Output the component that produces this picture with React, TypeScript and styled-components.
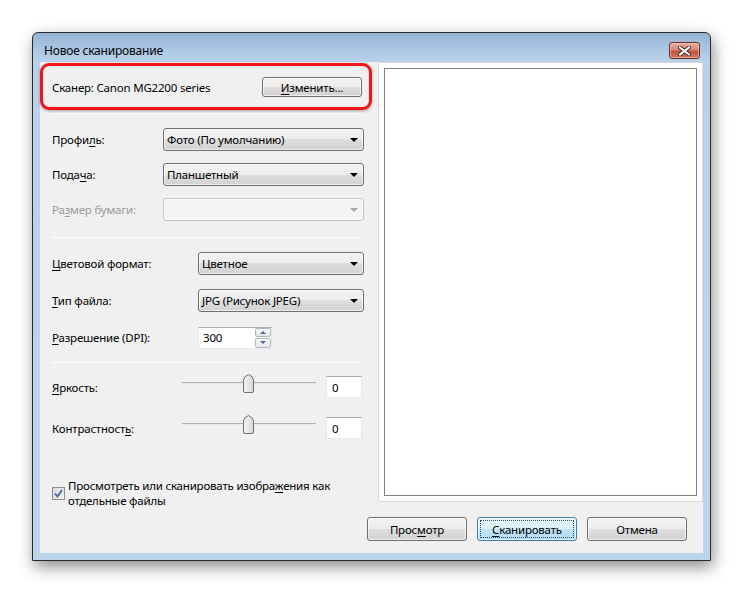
import React from "react";
import styled, { createGlobalStyle } from "styled-components";

const GlobalStyle = createGlobalStyle`
  html, body {
    margin: 0;
    padding: 0;
    background: #ffffff;
  }
  body {
    font-family: "Noto Sans", "Open Sans", sans-serif;
    font-size: 11.5px;
    letter-spacing: -0.2px;
    color: #000;
  }
`;

const Page = styled.div`
  width: 743px;
  height: 593px;
  box-sizing: border-box;
  padding: 32px 0 0 32px;
`;

const Window = styled.div`
  width: 679px;
  height: 529px;
  box-sizing: border-box;
  border: 1px solid #2a2a2a;
  border-radius: 6px 6px 0 0;
  background: linear-gradient(to bottom, #97b3d3 0px, #a9c4e2 14px, #b9d1ea 28px, #bcd4ec 100%);
  box-shadow: 2px 6px 16px rgba(0, 0, 0, 0.45);
  display: flex;
  flex-direction: column;
  padding: 0 7px 7px 7px;
`;

const TitleBar = styled.div`
  height: 29px;
  box-sizing: border-box;
  padding: 6px 3px 0 4px;
  display: flex;
  align-items: center;
  justify-content: space-between;
`;

const Title = styled.span`
  font-size: 12px;
  color: #000;
`;

const CloseButton = styled.div`
  width: 31px;
  height: 17px;
  box-sizing: border-box;
  border: 1px solid #6a2c25;
  border-radius: 3px;
  background: linear-gradient(to bottom, #e9a89b 0%, #d98a7c 45%, #c4523f 55%, #d47a68 100%);
  box-shadow: inset 0 0 0 1px rgba(255, 255, 255, 0.35);
  display: flex;
  align-items: center;
  justify-content: center;
`;

const Client = styled.div`
  flex: 1;
  background: #f0f0f0;
  display: grid;
  grid-template-columns: 338px 1fr;
  grid-template-rows: 440px 1fr;
`;

const LeftPane = styled.div`
  position: relative;
  padding: 15px 14px 0 12px;
  display: flex;
  flex-direction: column;
`;

const Highlight = styled.div`
  position: absolute;
  left: 0;
  top: 1px;
  width: 332px;
  height: 47px;
  box-sizing: border-box;
  border: 3px solid #f0151b;
  border-radius: 9px;
  box-shadow: 0 1px 3px rgba(0, 0, 0, 0.35), inset 0 0 1px rgba(120, 0, 0, 0.4);
  pointer-events: none;
`;

const ScannerRow = styled.div`
  height: 20px;
  margin-right: 2px;
  display: flex;
  align-items: center;
  justify-content: space-between;
`;

const Divider = styled.div<{ $top: number }>`
  margin-top: ${(p) => p.$top}px;
  margin-right: 2px;
  height: 1px;
  background: #a9a9a9;
  border-bottom: 1px solid #ffffff;
`;

const FieldGrid = styled.div<{ $label: number; $gap: number; $top: number; $row: number }>`
  margin-top: ${(p) => p.$top}px;
  display: grid;
  grid-template-columns: ${(p) => p.$label}px 1fr;
  grid-auto-rows: ${(p) => p.$row}px;
  row-gap: ${(p) => p.$gap}px;
  align-items: center;
`;

const SliderGrid = styled.div`
  margin-top: 13px;
  display: grid;
  grid-template-columns: 130px 144px 36px;
  grid-auto-rows: 22px;
  row-gap: 19px;
  align-items: center;
`;

const Label = styled.span<{ $disabled?: boolean }>`
  color: ${(p) => (p.$disabled ? "#9a9a9a" : "#000")};
  white-space: nowrap;
`;

const U = styled.u`
  text-decoration: underline;
  text-underline-offset: 2px;
`;

const Combo = styled.div<{ $disabled?: boolean }>`
  height: 23px;
  box-sizing: border-box;
  border: 1px solid ${(p) => (p.$disabled ? "#c4c4c4" : "#707070")};
  border-radius: 3px;
  background: ${(p) =>
    p.$disabled
      ? "#f4f4f4"
      : "linear-gradient(to bottom, #f3f3f3 0%, #ececec 50%, #dedede 50%, #d2d2d2 100%)"};
  box-shadow: inset 0 0 0 1px rgba(255, 255, 255, 0.6);
  display: flex;
  align-items: center;
  justify-content: space-between;
  padding: 0 5px 0 3px;
  white-space: nowrap;
`;

const Arrow = styled.span<{ $disabled?: boolean }>`
  width: 0;
  height: 0;
  border-left: 4px solid transparent;
  border-right: 4px solid transparent;
  border-top: 4px solid ${(p) => (p.$disabled ? "#a8a8a8" : "#000")};
`;

const NumberBox = styled.div`
  width: 74px;
  height: 22px;
  box-sizing: border-box;
  border: 1px solid #e3e9ef;
  border-top-color: #abadb3;
  background: #fff;
  display: flex;
  align-items: center;
  justify-content: space-between;
  padding-left: 4px;
`;

const Spinner = styled.div`
  width: 16px;
  height: 20px;
  display: flex;
  flex-direction: column;
  gap: 1px;
`;

const SpinButton = styled.div`
  flex: 1;
  box-sizing: border-box;
  border: 1px solid #b4b9c0;
  border-radius: 2px;
  background: linear-gradient(to bottom, #f7f7f7, #e4e6ea);
  display: flex;
  align-items: center;
  justify-content: center;
`;

const SpinArrow = styled.span<{ $up?: boolean }>`
  width: 0;
  height: 0;
  border-left: 3px solid transparent;
  border-right: 3px solid transparent;
  ${(p) => (p.$up ? "border-bottom: 3px solid #4d6a9e;" : "border-top: 3px solid #4d6a9e;")}
`;

const ValueBox = styled.div`
  width: 36px;
  height: 22px;
  box-sizing: border-box;
  border: 1px solid #e3e9ef;
  border-top-color: #abadb3;
  background: #fff;
  padding-left: 5px;
  display: flex;
  align-items: center;
`;

const SliderCell = styled.div`
  position: relative;
  width: 134px;
  height: 22px;
  align-self: start;
  margin-top: -4px;
`;

const Track = styled.div`
  position: absolute;
  left: 0;
  right: 0;
  top: 10px;
  height: 1px;
  background: #b3b3b3;
  border-bottom: 1px solid #e6e6e6;
`;

const Thumb = styled.svg`
  position: absolute;
  left: 61px;
  top: 2px;
`;

const CheckRow = styled.div`
  margin-top: 39px;
  display: flex;
  align-items: center;
  gap: 3px;
`;

const CheckBox = styled.div`
  width: 13px;
  height: 13px;
  box-sizing: border-box;
  border: 1px solid #8f8f8f;
  background: linear-gradient(135deg, #d8d8d8, #f4f4f4);
  display: flex;
  align-items: center;
  justify-content: center;
  flex-shrink: 0;
`;

const CheckText = styled.span`
  line-height: 15px;
  white-space: nowrap;
`;

const Preview = styled.div`
  box-sizing: border-box;
  border: 1px solid #d8d8d8;
  background: #fff;
  padding: 5px;
`;

const PreviewInner = styled.div`
  width: 100%;
  height: 100%;
  box-sizing: border-box;
  border: 1px solid #828282;
`;

const ButtonRow = styled.div`
  grid-column: 1 / -1;
  display: flex;
  justify-content: flex-end;
  gap: 10px;
  padding: 15px 16px 0 0;
`;

const Button = styled.div<{ $w?: number; $h?: number; $focused?: boolean }>`
  position: relative;
  width: ${(p) => p.$w ?? 100}px;
  height: ${(p) => p.$h ?? 24}px;
  box-sizing: border-box;
  border: 1px solid ${(p) => (p.$focused ? "#3c7fb1" : "#707070")};
  border-radius: 3px;
  background: ${(p) =>
    p.$focused
      ? "linear-gradient(to bottom, #e8f5fc 0%, #dcf0fb 50%, #c4e5f7 50%, #b0dbf3 100%)"
      : "linear-gradient(to bottom, #f3f3f3 0%, #ececec 50%, #dedede 50%, #d2d2d2 100%)"};
  box-shadow: inset 0 0 0 1px rgba(255, 255, 255, 0.65);
  display: flex;
  align-items: center;
  justify-content: center;
  white-space: nowrap;
  ${(p) =>
    p.$focused
      ? `&::after {
          content: "";
          position: absolute;
          inset: 2px;
          border: 1px dotted #2b4f73;
        }`
      : ""}
`;

function Slider() {
  return (
    <SliderCell>
      <Track />
      <Thumb width="11" height="19" viewBox="0 0 11 19">
        <defs>
          <linearGradient id="thumbFill" x1="0" y1="0" x2="1" y2="0">
            <stop offset="0" stopColor="#f6f6f6" />
            <stop offset="1" stopColor="#d6d6d6" />
          </linearGradient>
        </defs>
        <path
          d="M0.5 6 Q0.5 2.5 5.5 0.5 Q10.5 2.5 10.5 6 V17 Q10.5 18.5 9 18.5 H2 Q0.5 18.5 0.5 17 Z"
          fill="url(#thumbFill)"
          stroke="#6f6f6f"
        />
      </Thumb>
    </SliderCell>
  );
}

export default function App() {
  return (
    <>
      <GlobalStyle />
      <Page>
        <Window>
          <TitleBar>
            <Title>Новое сканирование</Title>
            <CloseButton>
              <svg width="13" height="10" viewBox="0 0 13 10">
                <path d="M2 1.5 L11 8.5 M11 1.5 L2 8.5" stroke="#4a2420" strokeWidth="4" strokeLinecap="square" />
                <path d="M2 1.5 L11 8.5 M11 1.5 L2 8.5" stroke="#ffffff" strokeWidth="2" strokeLinecap="square" />
              </svg>
            </CloseButton>
          </TitleBar>
          <Client>
            <LeftPane>
              <ScannerRow>
                <span>Сканер: Canon MG2200 series</span>
                <Button $w={100} $h={20}>
                  <span>
                    <U>И</U>зменить...
                  </span>
                </Button>
              </ScannerRow>
              <Divider $top={16} />
              <FieldGrid $label={111} $gap={12} $top={14} $row={23}>
                <Label>
                  Профи<U>л</U>ь:
                </Label>
                <Combo>
                  <span>Фото (По умолчанию)</span>
                  <Arrow />
                </Combo>
                <Label>
                  Пода<U>ч</U>а:
                </Label>
                <Combo>
                  <span>Планшетный</span>
                  <Arrow />
                </Combo>
                <Label $disabled>
                  Ра<U>з</U>мер бумаги:
                </Label>
                <Combo $disabled>
                  <span />
                  <Arrow $disabled />
                </Combo>
              </FieldGrid>
              <Divider $top={16} />
              <FieldGrid $label={146} $gap={14} $top={14} $row={23}>
                <Label>
                  <U>Ц</U>ветовой формат:
                </Label>
                <Combo>
                  <span>Цветное</span>
                  <Arrow />
                </Combo>
                <Label>
                  <U>Т</U>ип файла:
                </Label>
                <Combo>
                  <span>JPG (Рисунок JPEG)</span>
                  <Arrow />
                </Combo>
                <Label>
                  <U>Р</U>азрешение (DPI):
                </Label>
                <NumberBox>
                  <span>300</span>
                  <Spinner>
                    <SpinButton>
                      <SpinArrow $up />
                    </SpinButton>
                    <SpinButton>
                      <SpinArrow />
                    </SpinButton>
                  </Spinner>
                </NumberBox>
              </FieldGrid>
              <Divider $top={13} />
              <SliderGrid>
                <Label>
                  <U>Я</U>ркость:
                </Label>
                <Slider />
                <ValueBox>0</ValueBox>
                <Label>
                  Контрастност<U>ь</U>:
                </Label>
                <Slider />
                <ValueBox>0</ValueBox>
              </SliderGrid>
              <CheckRow>
                <CheckBox>
                  <svg width="9" height="9" viewBox="0 0 9 9">
                    <path d="M1 4.5 L3.5 7.5 L8 1" fill="none" stroke="#4b63a6" strokeWidth="1.8" />
                  </svg>
                </CheckBox>
                <CheckText>
                  Просмотреть или сканировать изобра<U>ж</U>ения как
                  <br />
                  отдельные файлы
                </CheckText>
              </CheckRow>
              <Highlight />
            </LeftPane>
            <Preview>
              <PreviewInner />
            </Preview>
            <ButtonRow>
              <Button>
                <span>
                  Прос<U>м</U>отр
                </span>
              </Button>
              <Button $focused>
                <span>
                  <U>С</U>канировать
                </span>
              </Button>
              <Button>
                <span>Отмена</span>
              </Button>
            </ButtonRow>
          </Client>
        </Window>
      </Page>
    </>
  );
}
